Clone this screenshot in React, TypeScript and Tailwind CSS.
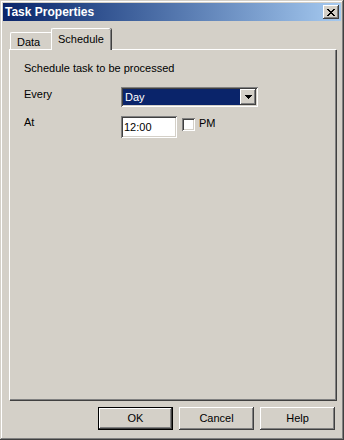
import React from "react";

const raised =
	"shadow-[inset_-1px_-1px_#404040,inset_1px_1px_#ffffff,inset_-2px_-2px_#808080,inset_2px_2px_#d4d0c8]";
const sunken =
	"shadow-[inset_1px_1px_#808080,inset_-1px_-1px_#ffffff,inset_2px_2px_#404040,inset_-2px_-2px_#d4d0c8]";

function DialogButton({ label, isDefault = false }: { label: string; isDefault?: boolean }) {
	return (
		<button
			type="button"
			className={`flex h-[23px] w-[75px] items-center justify-center bg-[#d4d0c8] text-[11px] text-black ${
				isDefault ? "border border-black" : ""
			}`}
		>
			<span className={`flex h-full w-full items-center justify-center ${raised}`}>{label}</span>
		</button>
	);
}

export default function App() {
	return (
		<div
			className={`flex h-[440px] w-[344px] flex-col bg-[#d4d0c8] p-[3px] text-black shadow-[inset_-1px_-1px_#404040,inset_1px_1px_#d4d0c8,inset_-2px_-2px_#808080,inset_2px_2px_#ffffff]`}
			style={{ fontFamily: '"Liberation Sans", Arial, sans-serif' }}
		>
			{/* title bar */}
			<div className="flex h-[18px] items-center justify-between bg-linear-to-r from-[#0a246a] to-[#a6caf0] pl-[2px] pr-[2px]">
				<span className="text-[12px] font-bold leading-none text-white">Task Properties</span>
				<button
					type="button"
					className={`flex h-[14px] w-[16px] items-center justify-center bg-[#d4d0c8] ${raised}`}
				>
					<svg width="8" height="7" viewBox="0 0 8 7" shapeRendering="crispEdges">
						<path
							d="M0 0h2v1H0zM6 0h2v1H6zM1 1h2v1H1zM5 1h2v1H5zM2 2h4v1H2zM3 3h2v1H3zM2 4h4v1H2zM1 5h2v1H1zM5 5h2v1H5zM0 6h2v1H0zM6 6h2v1H6z"
							fill="#000"
						/>
					</svg>
				</button>
			</div>

			{/* tabs */}
			<div className="mt-[7px] ml-[7px] flex h-[21px] items-end text-[11px]">
				<div className="flex h-[17px] w-[43px] items-start border-t border-l border-white pl-[6px] pt-[1px] rounded-tl-[2px]">
					Data
				</div>
				<div className="relative z-10 -mb-px -ml-[2px] flex h-[22px] w-[60px] items-start rounded-tl-[2px] rounded-tr-[2px] border-t border-l border-white bg-[#d4d0c8] pl-[6px] pt-[2px] shadow-[inset_-1px_0_#808080,1px_0_#404040]">
					Schedule
				</div>
			</div>

			{/* panel */}
			<div className="ml-[6px] flex h-[351px] w-[327px] flex-col border-t border-l border-white pl-[14px] pt-[12px] text-[11px] shadow-[inset_-1px_-1px_#808080,1px_1px_#404040]">
				<div className="h-[13px] leading-[13px]">Schedule task to be processed</div>

				<div className="mt-[12px] flex h-[20px] items-start">
					<span className="w-[97px] pt-[1px] leading-[13px]">Every</span>
					<div className={`flex h-[20px] w-[137px] items-stretch bg-white p-[2px] ${sunken}`}>
						<div className="flex flex-1 items-center bg-[#0a246a] pl-[2px] text-white">Day</div>
						<div
							className={`flex w-[16px] items-center justify-center bg-[#d4d0c8] ${raised}`}
						>
							<svg width="7" height="4" viewBox="0 0 7 4" shapeRendering="crispEdges">
								<path d="M0 0h7v1H0zM1 1h5v1H1zM2 2h3v1H2zM3 3h1v1H3z" fill="#000" />
							</svg>
						</div>
					</div>
				</div>

				<div className="mt-[9px] flex h-[22px] items-start">
					<span className="w-[97px] leading-[13px]">At</span>
					<div className={`flex h-[22px] w-[56px] items-center bg-white pl-[3px] ${sunken}`}>12:00</div>
					<div className={`mt-[2px] ml-[5px] h-[13px] w-[13px] bg-white ${sunken}`} />
					<span className="ml-[4px] pt-[1px] leading-[13px]">PM</span>
				</div>
			</div>

			{/* buttons */}
			<div className="mt-[7px] flex justify-end gap-[6px] pr-[6px]">
				<DialogButton label="OK" isDefault />
				<DialogButton label="Cancel" />
				<DialogButton label="Help" />
			</div>
		</div>
	);
}
